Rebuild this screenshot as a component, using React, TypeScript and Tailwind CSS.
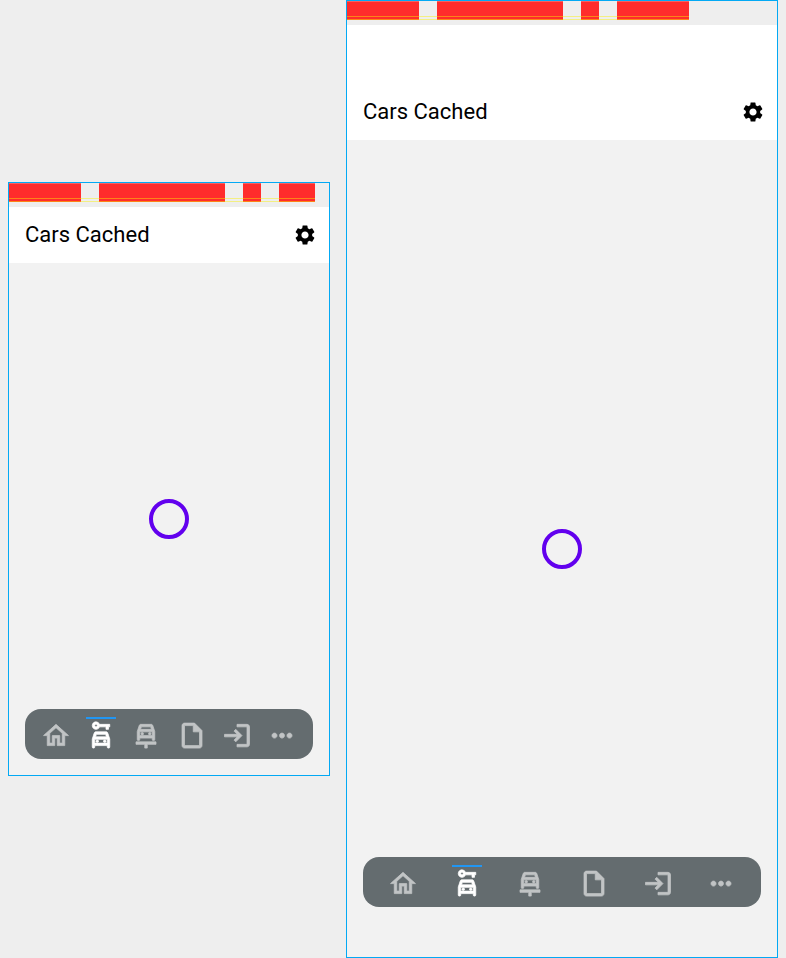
import React from "react";
import {
  MdOutlineHome,
  MdOutlineCarRental,
  MdOutlineCarRepair,
  MdOutlineInsertDriveFile,
  MdOutlineLogin,
  MdOutlineMoreHoriz,
  MdSettings,
} from "react-icons/md";

const tabs = [
  { name: "Home", Icon: MdOutlineHome },
  { name: "Rental", Icon: MdOutlineCarRental, active: true },
  { name: "Repair", Icon: MdOutlineCarRepair },
  { name: "Documents", Icon: MdOutlineInsertDriveFile },
  { name: "Sign in", Icon: MdOutlineLogin },
  { name: "More", Icon: MdOutlineMoreHoriz },
];

function Word({ className }: { className: string }) {
  return (
    <span
      className={`block h-full shrink-0 border-t border-[#f96060] bg-[#ff2c2c] ${className}`}
    />
  );
}

function DeviceLabel({ lastWord, underline }: { lastWord: string; underline: string }) {
  return (
    <div className="relative h-6 shrink-0">
      <div className="flex h-[18.5px] gap-[18px] overflow-hidden">
        <Word className="w-[72px]" />
        <Word className="w-[126px]" />
        <Word className="w-[18px]" />
        <Word className={lastWord} />
      </div>
      <span
        className={`absolute left-0 top-[15px] h-1 border-y border-[#f8f000]/45 ${underline}`}
      />
    </div>
  );
}

type DeviceProps = {
  frame: string;
  header: string;
  lastWord: string;
  underline: string;
  navOffset: string;
};

function Device({ frame, header, lastWord, underline, navOffset }: DeviceProps) {
  return (
    <section className={`flex shrink-0 flex-col border border-[#03a9f4] ${frame}`}>
      <DeviceLabel lastWord={lastWord} underline={underline} />
      <header className={`flex shrink-0 flex-col justify-end bg-white ${header}`}>
        <div className="flex h-14 items-center justify-between pl-4 pr-3">
          <h1 className="text-[22px] leading-7 text-black">Cars Cached</h1>
          <MdSettings className="size-6 text-black" />
        </div>
      </header>
      <main className="relative flex flex-1 items-center justify-center bg-[#f2f2f2]">
        <div className="size-10 rounded-full border-4 border-[#6200ee]" />
        <nav
          className={`absolute inset-x-4 flex h-[50px] rounded-[16px] bg-[#646c6f] px-2 ${navOffset}`}
        >
          {tabs.map(({ name, Icon, active }) => (
            <div
              key={name}
              className="relative flex flex-1 items-center justify-center pt-0.5"
            >
              {active && (
                <span className="absolute left-1/2 top-2 h-0.5 w-[30px] -translate-x-1/2 bg-[#2196f3]" />
              )}
              <Icon
                aria-label={name}
                className={`size-[30px] translate-y-[0.6px] [&>*]:stroke-current [&>*]:stroke-[0.6px] [&>[fill=none]]:hidden ${
                  active ? "text-white" : "text-[#c1c4c5]"
                }`}
              />
            </div>
          ))}
        </nav>
      </main>
    </section>
  );
}

export default function App() {
  return (
    <div className="flex h-[958px] w-[786px] items-center gap-4 overflow-hidden bg-[#eeeeee] pl-2 font-[Roboto,sans-serif]">
      <Device
        frame="h-[594px] w-[322px]"
        header="h-14"
        lastWord="w-[36px]"
        underline="w-[306px]"
        navOffset="bottom-4"
      />
      <Device
        frame="h-[958px] w-[432px]"
        header="h-[115px]"
        lastWord="w-[72px]"
        underline="w-[342px]"
        navOffset="bottom-[50px]"
      />
    </div>
  );
}
